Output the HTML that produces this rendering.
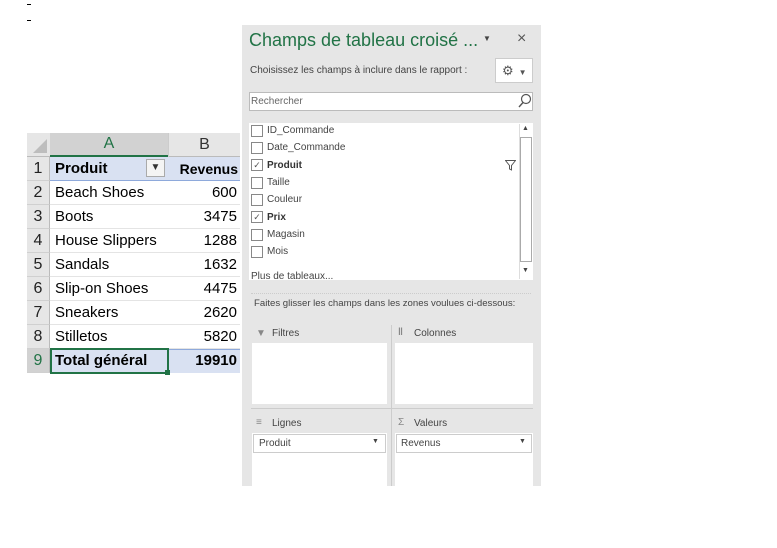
<!DOCTYPE html><html><head><meta charset="utf-8"><style>
body{margin:0;width:777px;height:548px;background:#fff;position:relative;overflow:hidden;font-family:"Liberation Sans",sans-serif}
.a{position:absolute}
.cell{position:absolute;height:24px;line-height:24px;font-size:15px;color:#000;box-sizing:border-box}
.rh{left:27px;width:23px;background:#e6e6e6;color:#222;text-align:center;font-size:16px;border-bottom:1px solid #d0d0d0;border-right:1px solid #bbb}
.ca{left:50px;width:118px;padding-left:5px;border-bottom:1px solid #e4e4e4}
.cb{left:168px;width:72px;text-align:right;padding-right:3px;border-bottom:1px solid #e4e4e4}
.p{font-family:"Liberation Sans",sans-serif;color:#444;font-size:10px}
.cbx{position:absolute;left:251px;width:10px;height:10px;border:1px solid #888;background:#fff}
.fl{position:absolute;left:267px}
</style></head><body>
<div class="a" style="left:27px;top:4px;width:4px;height:1px;background:#000"></div>
<div class="a" style="left:27px;top:20px;width:4px;height:1px;background:#000"></div>
<div class="a" style="left:27px;top:133px;width:213px;height:24px;background:#e6e6e6;border-bottom:1px solid #bbb;box-sizing:border-box"></div>
<div class="a" style="left:33px;top:139px;width:0;height:0;border-left:14px solid transparent;border-bottom:14px solid #bdbdbd"></div>
<div class="a" style="left:50px;top:133px;width:118px;height:24px;background:#d2d2d2;border-bottom:2px solid #217346;box-sizing:border-box;text-align:center;line-height:22px;font-size:16px;color:#217346">A</div>
<div class="a" style="left:168px;top:133px;width:72px;height:24px;text-align:center;line-height:23px;font-size:16px;color:#333;border-left:1px solid #ccc;box-sizing:border-box">B</div>
<div class="a" style="left:50px;top:157px;width:190px;height:24px;background:#d9e1f2;border-bottom:1px solid #8ea9db;box-sizing:border-box"></div>
<div class="a" style="left:50px;top:349px;width:190px;height:24px;background:#d9e1f2;border-top:1px solid #8ea9db;box-sizing:border-box"></div>
<div class="cell rh" style="top:157px">1</div>
<div class="cell ca" style="top:157px;font-weight:bold;border:none">Produit</div>
<div class="a" style="left:146px;top:159px;width:19px;height:18px;border:1px solid #aaa;background:#f4f4f4;box-sizing:border-box;font-size:10px;text-align:center;line-height:16px;color:#333">▼</div>
<div class="cell cb" style="top:157px;font-weight:bold;border:none;font-size:14px;padding-right:2px">Revenus</div>
<div class="cell rh" style="top:181px">2</div><div class="cell ca" style="top:181px">Beach Shoes</div><div class="cell cb" style="top:181px">600</div>
<div class="cell rh" style="top:205px">3</div><div class="cell ca" style="top:205px">Boots</div><div class="cell cb" style="top:205px">3475</div>
<div class="cell rh" style="top:229px">4</div><div class="cell ca" style="top:229px">House Slippers</div><div class="cell cb" style="top:229px">1288</div>
<div class="cell rh" style="top:253px">5</div><div class="cell ca" style="top:253px">Sandals</div><div class="cell cb" style="top:253px">1632</div>
<div class="cell rh" style="top:277px">6</div><div class="cell ca" style="top:277px">Slip-on Shoes</div><div class="cell cb" style="top:277px">4475</div>
<div class="cell rh" style="top:301px">7</div><div class="cell ca" style="top:301px">Sneakers</div><div class="cell cb" style="top:301px">2620</div>
<div class="cell rh" style="top:325px">8</div><div class="cell ca" style="top:325px">Stilletos</div><div class="cell cb" style="top:325px">5820</div>
<div class="cell rh" style="top:349px;background:#d2d2d2;color:#217346">9</div>
<div class="cell ca" style="top:349px;font-weight:bold;border:none">Total général</div>
<div class="cell cb" style="top:349px;font-weight:bold;border:none">19910</div>
<div class="a" style="left:50px;top:348px;width:119px;height:26px;border:2px solid #217346;box-sizing:border-box"></div>
<div class="a" style="left:165px;top:370px;width:5px;height:5px;background:#217346"></div>
<!-- panel -->
<div class="a" style="left:242px;top:25px;width:299px;height:461px;background:#e6e6e6"></div>
<div class="a" style="left:249px;top:30px;font-size:18px;color:#217346">Champs de tableau croisé ...</div>
<div class="a p" style="left:483px;top:34px;font-size:8px">▼</div>
<div class="a" style="left:517px;top:30px;font-size:16px;color:#555">×</div>
<div class="a p" style="left:250px;top:65px">Choisissez les champs à inclure dans le rapport :</div>
<div class="a" style="left:495px;top:58px;width:38px;height:25px;background:#fff;border:1px solid #ccc;box-sizing:border-box;font-size:13px;color:#555;line-height:23px;padding-left:6px">⚙<span style="font-size:8px;margin-left:5px">▼</span></div>
<div class="a" style="left:249px;top:92px;width:284px;height:19px;background:#fff;border:1px solid #bbb;box-sizing:border-box"></div>
<div class="a p" style="left:251px;top:96px;color:#666">Rechercher</div>
<svg class="a" style="left:518px;top:93px" width="14" height="16"><circle cx="8" cy="6" r="4.5" fill="none" stroke="#555" stroke-width="1.2"/><line x1="5" y1="9.5" x2="1" y2="14" stroke="#555" stroke-width="1.4"/></svg>
<div class="a" style="left:249px;top:123px;width:284px;height:157px;background:#fff"></div>
<div class="a" style="left:519px;top:124px;width:13px;height:155px;border-left:1px solid #ddd;background:#fff"></div>
<div class="a" style="left:520px;top:137px;width:10px;height:123px;border:1px solid #aaa;background:#fff"></div>
<div class="a p" style="left:522px;top:125px;font-size:7px">▲</div>
<div class="a p" style="left:522px;top:267px;font-size:7px">▼</div>
<div class="cbx" style="top:125px"></div><div class="fl p" style="top:125px">ID_Commande</div>
<div class="cbx" style="top:142px"></div><div class="fl p" style="top:142px">Date_Commande</div>
<div class="cbx" style="top:159px;font-size:9px;line-height:10px;color:#555;text-align:center">✓</div><div class="fl p" style="top:160px;font-weight:bold;color:#333">Produit</div>
<svg class="a" style="left:505px;top:160px" width="11" height="11"><path d="M0.5 0.5H10.5L6.5 5.5V10L4.5 9V5.5Z" fill="none" stroke="#555"/></svg>
<div class="cbx" style="top:177px"></div><div class="fl p" style="top:177px">Taille</div>
<div class="cbx" style="top:194px"></div><div class="fl p" style="top:194px">Couleur</div>
<div class="cbx" style="top:211px;font-size:9px;line-height:10px;color:#555;text-align:center">✓</div><div class="fl p" style="top:212px;font-weight:bold;color:#333">Prix</div>
<div class="cbx" style="top:229px"></div><div class="fl p" style="top:229px">Magasin</div>
<div class="cbx" style="top:246px"></div><div class="fl p" style="top:246px">Mois</div>
<div class="a p" style="left:251px;top:271px;height:9px;overflow:hidden">Plus de tableaux...</div>
<div class="a" style="left:251px;top:293px;width:280px;border-top:1px dotted #ccc"></div>
<div class="a p" style="left:254px;top:298px;font-size:9.6px">Faites glisser les champs dans les zones voulues ci-dessous:</div>
<div class="a" style="left:391px;top:325px;width:1px;height:161px;background:#ccc"></div>
<div class="a" style="left:251px;top:408px;width:282px;height:1px;background:#ccc"></div>
<div class="a p" style="left:256px;top:328px;color:#888">▼</div><div class="a p" style="left:272px;top:328px">Filtres</div>
<div class="a p" style="left:398px;top:327px;color:#888;font-weight:bold">‖</div><div class="a p" style="left:414px;top:328px">Colonnes</div>
<div class="a" style="left:252px;top:343px;width:135px;height:61px;background:#fff"></div>
<div class="a" style="left:395px;top:343px;width:138px;height:61px;background:#fff"></div>
<div class="a p" style="left:256px;top:417px;color:#888">≡</div><div class="a p" style="left:272px;top:418px">Lignes</div>
<div class="a p" style="left:398px;top:417px;color:#888">Σ</div><div class="a p" style="left:414px;top:418px">Valeurs</div>
<div class="a" style="left:252px;top:433px;width:135px;height:53px;background:#fff"></div>
<div class="a" style="left:395px;top:433px;width:138px;height:53px;background:#fff"></div>
<div class="a" style="left:253px;top:434px;width:133px;height:19px;border:1px solid #ccc;box-sizing:border-box"></div>
<div class="a" style="left:396px;top:434px;width:136px;height:19px;border:1px solid #ccc;box-sizing:border-box"></div>
<div class="a p" style="left:259px;top:438px">Produit</div><div class="a p" style="left:372px;top:438px;font-size:7px">▼</div>
<div class="a p" style="left:401px;top:438px">Revenus</div><div class="a p" style="left:519px;top:438px;font-size:7px">▼</div>
</body></html>
